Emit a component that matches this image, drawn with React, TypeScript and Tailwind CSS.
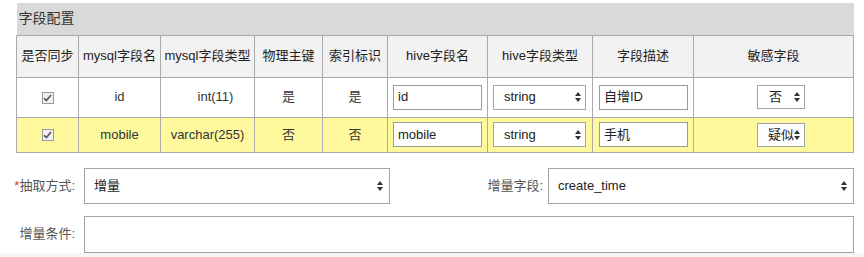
const FONT = { fontFamily: '"Liberation Sans", "Noto Sans CJK SC", sans-serif' };

const COLS = [62, 82, 94, 68, 65, 100, 105, 101, 160];

const HEADERS = [
  "是否同步",
  "mysql字段名",
  "mysql字段类型",
  "物理主键",
  "索引标识",
  "hive字段名",
  "hive字段类型",
  "字段描述",
  "敏感字段",
];

interface RowType {
  name: string;
  type: string;
  pk: string;
  idx: string;
  hive: string;
  hiveType: string;
  desc: string;
  sensitive: string;
  highlight: boolean;
}

const rows: RowType[] = [
  {
    name: "id",
    type: "int(11)",
    pk: "是",
    idx: "是",
    hive: "id",
    hiveType: "string",
    desc: "自增ID",
    sensitive: "否",
    highlight: false,
  },
  {
    name: "mobile",
    type: "varchar(255)",
    pk: "否",
    idx: "否",
    hive: "mobile",
    hiveType: "string",
    desc: "手机",
    sensitive: "疑似",
    highlight: true,
  },
];

function Arrows() {
  return (
    <svg width="6" height="10" viewBox="0 0 6 10" className="shrink-0">
      <polygon points="0,4 3,0 6,4" fill="#333" />
      <polygon points="0,6 3,10 6,6" fill="#333" />
    </svg>
  );
}

function Check() {
  return (
    <span className="inline-flex w-[12px] h-[12px] border border-[#9a9a9a] bg-[#f0f0f0] items-center justify-center align-middle">
      <svg width="9" height="8" viewBox="0 0 9 8">
        <path d="M1 4.2 L3.4 6.6 L8 1" stroke="#555" strokeWidth="1.6" fill="none" />
      </svg>
    </span>
  );
}

function SelectBox({ value, className }: { value: string; className: string }) {
  return (
    <div
      className={`flex items-center bg-white border border-[#a3a3a3] text-[13px] text-[#222] ${className}`}
    >
      <span className="flex-1 min-w-0 overflow-hidden whitespace-nowrap">{value}</span>
      <Arrows />
    </div>
  );
}

function TextBox({ value, className }: { value: string; className: string }) {
  return (
    <div
      className={`flex items-center bg-white border border-[#9a9a9a] text-[13px] text-[#222] whitespace-nowrap ${className}`}
    >
      {value}
    </div>
  );
}

export default function App() {
  return (
    <div className="w-[864px] h-[257px] bg-white flex flex-col text-[#333]" style={FONT}>
      <div className="pl-[16px] pt-[3px]">
        <table className="table-fixed border-collapse w-[837px]">
          <colgroup>
            {COLS.map((w, i) => (
              <col key={i} style={{ width: w }} />
            ))}
          </colgroup>
          <tbody>
            <tr className="h-[32px] bg-[#d9d9d9]">
              <td colSpan={9} className="pl-[2px] text-[14px] text-[#333] border-b border-[#aaa]">
                字段配置
              </td>
            </tr>
            <tr className="h-[42px] bg-[#f2f2f2]">
              {HEADERS.map((h) => (
                <td
                  key={h}
                  className="border border-[#aaa] text-center text-[13px] text-[#222] whitespace-nowrap px-0"
                >
                  {h}
                </td>
              ))}
            </tr>
            {rows.map((r, i) => (
              <tr
                key={r.name}
                className={`${i === 0 ? "h-[40px] bg-white" : "h-[35px] bg-[#fdf99c]"} text-[13px] text-[#333]`}
              >
                <td className="border border-[#aaa] text-center">
                  <Check />
                </td>
                <td className="border border-[#aaa] text-center">{r.name}</td>
                <td className={`border border-[#aaa] text-center ${i === 0 ? "pl-[16px]" : ""}`}>
                  {r.type}
                </td>
                <td className="border border-[#aaa] text-center">{r.pk}</td>
                <td className="border border-[#aaa] text-center">{r.idx}</td>
                <td className="border border-[#aaa] pl-[5px]">
                  <TextBox value={r.hive} className="w-[89px] h-[25px] pl-[4px]" />
                </td>
                <td className="border border-[#aaa] pl-[5px]">
                  <SelectBox value={r.hiveType} className="w-[93px] h-[25px] pl-[10px] pr-[4px]" />
                </td>
                <td className="border border-[#aaa] pl-[6px]">
                  <TextBox value={r.desc} className="w-[89px] h-[25px] pl-[4px]" />
                </td>
                <td className="border border-[#aaa] pl-[63px]">
                  <SelectBox
                    value={r.sensitive}
                    className={`w-[48px] h-[24px] pr-[4px] ${i === 0 ? "pl-[11px]" : "pl-[10px]"}`}
                  />
                </td>
              </tr>
            ))}
          </tbody>
        </table>
      </div>

      <div className="flex items-center mt-[15px] text-[13px]">
        <div className="w-[84px] pr-[9px] text-right text-[#555] whitespace-nowrap">
          <span className="text-[#e53935]">*</span>抽取方式:
        </div>
        <SelectBox value="增量" className="w-[306px] h-[36px] pl-[9px] pr-[6px] text-[13px]" />
        <div className="w-[158px] pr-[5px] text-right text-[#555] whitespace-nowrap">增量字段:</div>
        <SelectBox value="create_time" className="w-[306px] h-[36px] pl-[9px] pr-[6px]" />
      </div>

      <div className="flex items-center mt-[12px] text-[13px]">
        <div className="w-[84px] pr-[9px] text-right text-[#555] whitespace-nowrap">增量条件:</div>
        <div className="w-[770px] h-[37px] bg-white border border-[#a3a3a3]" />
      </div>

      <div className="mt-auto h-[5px] bg-[#f6f6f6]" />
    </div>
  );
}
